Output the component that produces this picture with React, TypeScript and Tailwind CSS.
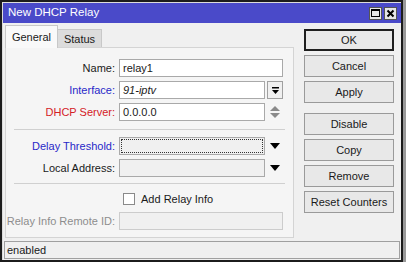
import React from "react";

const font = { fontFamily: '"Liberation Sans", Arial, sans-serif' };

function DropBtn() {
  return (
    <div className="w-[16px] h-[18px] border border-[#a0a0a0] bg-[#f0f0f0] flex items-center justify-center">
      <svg width="9" height="9" viewBox="0 0 9 9">
        <rect x="1" y="1" width="7" height="1.5" fill="#000" />
        <polygon points="1,4 8,4 4.5,8" fill="#000" />
      </svg>
    </div>
  );
}

function Spinner() {
  return (
    <div className="w-[16px] h-[18px] flex flex-col items-center justify-center gap-[2px]">
      <svg width="10" height="5" viewBox="0 0 10 5"><polygon points="0,5 10,5 5,0" fill="#8a8a8a" /></svg>
      <svg width="10" height="5" viewBox="0 0 10 5"><polygon points="0,0 10,0 5,5" fill="#8a8a8a" /></svg>
    </div>
  );
}

function Arrow() {
  return (
    <div className="w-[16px] h-[18px] flex items-center justify-center">
      <svg width="10" height="6" viewBox="0 0 10 6"><polygon points="0,0 10,0 5,6" fill="#000" /></svg>
    </div>
  );
}

function Row({ label, color, children }: { label: string; color?: string; children: React.ReactNode }) {
  return (
    <div className="flex items-center h-[18px]">
      <div className={`w-[113px] text-right pr-[4px] ${color ?? "text-[#1a1a1a]"}`}>{label}</div>
      {children}
    </div>
  );
}

function Btn({ label, def }: { label: string; def?: boolean }) {
  return (
    <div
      className={`h-[22px] w-[90px] flex items-center justify-center bg-[#e8e8e8] ${
        def ? "border-2 border-[#1e1e1e]" : "border border-[#9a9a9a]"
      }`}
    >
      {label}
    </div>
  );
}

export default function App() {
  return (
    <div className="w-[406px] h-[267px] bg-white text-[11px] text-[#1a1a1a] overflow-hidden flex items-start" style={font}>
      <div className="w-[403px] h-[262px] bg-[#1c1c1c] p-[2px] flex">
        <div className="flex-1 bg-[#f0f0f0] flex flex-col border-l border-t border-[#dcdcdc]">
          {/* title bar */}
          <div className="h-[20px] bg-[#4a4ac9] flex items-center pl-[5px] pr-[4px]">
            <span className="text-white text-[11.5px]">New DHCP Relay</span>
            <div className="ml-auto flex gap-[2px]">
              <div className="w-[13px] h-[13px] bg-[#e6e6e6] border border-[#555] flex items-center justify-center">
                <div className="w-[9px] h-[8px] border border-black border-t-2" />
              </div>
              <div className="w-[13px] h-[13px] bg-[#e6e6e6] border border-[#555] flex items-center justify-center">
                <svg width="9" height="9" viewBox="0 0 9 9">
                  <path d="M1.5 1.5 L7.5 7.5 M7.5 1.5 L1.5 7.5" stroke="#000" strokeWidth="2" />
                </svg>
              </div>
            </div>
          </div>

          <div className="flex flex-1">
            {/* left */}
            <div className="w-[292px] pl-[2px] pt-[2px] flex flex-col">
              <div className="flex items-end h-[23px]">
                <div className="h-[23px] w-[53px] bg-[#f9f9f9] border border-b-0 border-[#c8c8c8] flex items-center justify-center relative z-10">
                  General
                </div>
                <div className="h-[19px] w-[44px] bg-[#dcdcdc] border border-l-0 border-b-0 border-[#c8c8c8] flex items-center justify-center">
                  Status
                </div>
              </div>
              <div className="w-[289px] h-[191px] border border-[#d4d4d4] bg-[#f5f5f5] -mt-[1px] flex flex-col pt-[11px]">
                <div className="flex flex-col gap-[4px]">
                  <Row label="Name:">
                    <div className="w-[164px] h-[18px] bg-white border border-[#a9a9a9] flex items-center px-[3px]">relay1</div>
                  </Row>
                  <Row label="Interface:" color="text-[#2828c8]">
                    <div className="w-[146px] h-[18px] bg-white border border-[#a9a9a9] flex items-center px-[3px] italic">91-iptv</div>
                    <div className="ml-[2px]"><DropBtn /></div>
                  </Row>
                  <Row label="DHCP Server:" color="text-[#d42026]">
                    <div className="w-[146px] h-[18px] bg-white border border-[#a9a9a9] flex items-center px-[3px]">0.0.0.0</div>
                    <div className="ml-[2px]"><Spinner /></div>
                  </Row>
                </div>
                <div className="mt-[8px] mx-[8px] h-px bg-[#d0d0d0]" />
                <div className="mt-[7px] flex flex-col gap-[4px]">
                  <Row label="Delay Threshold:" color="text-[#2828c8]">
                    <div className="w-[146px] h-[18px] bg-[#f0f0f0] border border-[#a9a9a9] p-[1px]">
                      <div className="w-full h-full border border-dotted border-[#333]" />
                    </div>
                    <div className="ml-[2px]"><Arrow /></div>
                  </Row>
                  <Row label="Local Address:">
                    <div className="w-[146px] h-[18px] bg-[#f0f0f0] border border-[#a9a9a9]" />
                    <div className="ml-[2px]"><Arrow /></div>
                  </Row>
                </div>
                <div className="mt-[6px] mx-[8px] h-px bg-[#d0d0d0]" />
                <div className="mt-[6px] flex flex-col gap-[4px]">
                  <div className="flex items-center h-[18px] pl-[117px]">
                    <div className="w-[12px] h-[12px] bg-white border border-[#8a8a8a]" />
                    <span className="ml-[6px]">Add Relay Info</span>
                  </div>
                  <Row label="Relay Info Remote ID:" color="text-[#8d8d8d]">
                    <div className="w-[164px] h-[18px] bg-[#f0f0f0] border border-[#cccccc]" />
                  </Row>
                </div>
              </div>
            </div>
            {/* right */}
            <div className="flex flex-col pl-[9px] pt-[6px]">
              <div className="flex flex-col gap-[4px]">
                <Btn label="OK" def />
                <Btn label="Cancel" />
                <Btn label="Apply" />
              </div>
              <div className="mt-[10px] flex flex-col gap-[4px]">
                <Btn label="Disable" />
                <Btn label="Copy" />
                <Btn label="Remove" />
                <Btn label="Reset Counters" />
              </div>
            </div>
          </div>

          {/* status bar */}
          <div className="h-[18px] mx-[1px] mb-[1px] border border-[#a0a0a0] bg-[#f0f0f0] flex items-center px-[2px]">
            enabled
          </div>
        </div>
      </div>
      <div className="w-[3px] h-[262px] bg-[#9a9a9a]" />
    </div>
  );
}
